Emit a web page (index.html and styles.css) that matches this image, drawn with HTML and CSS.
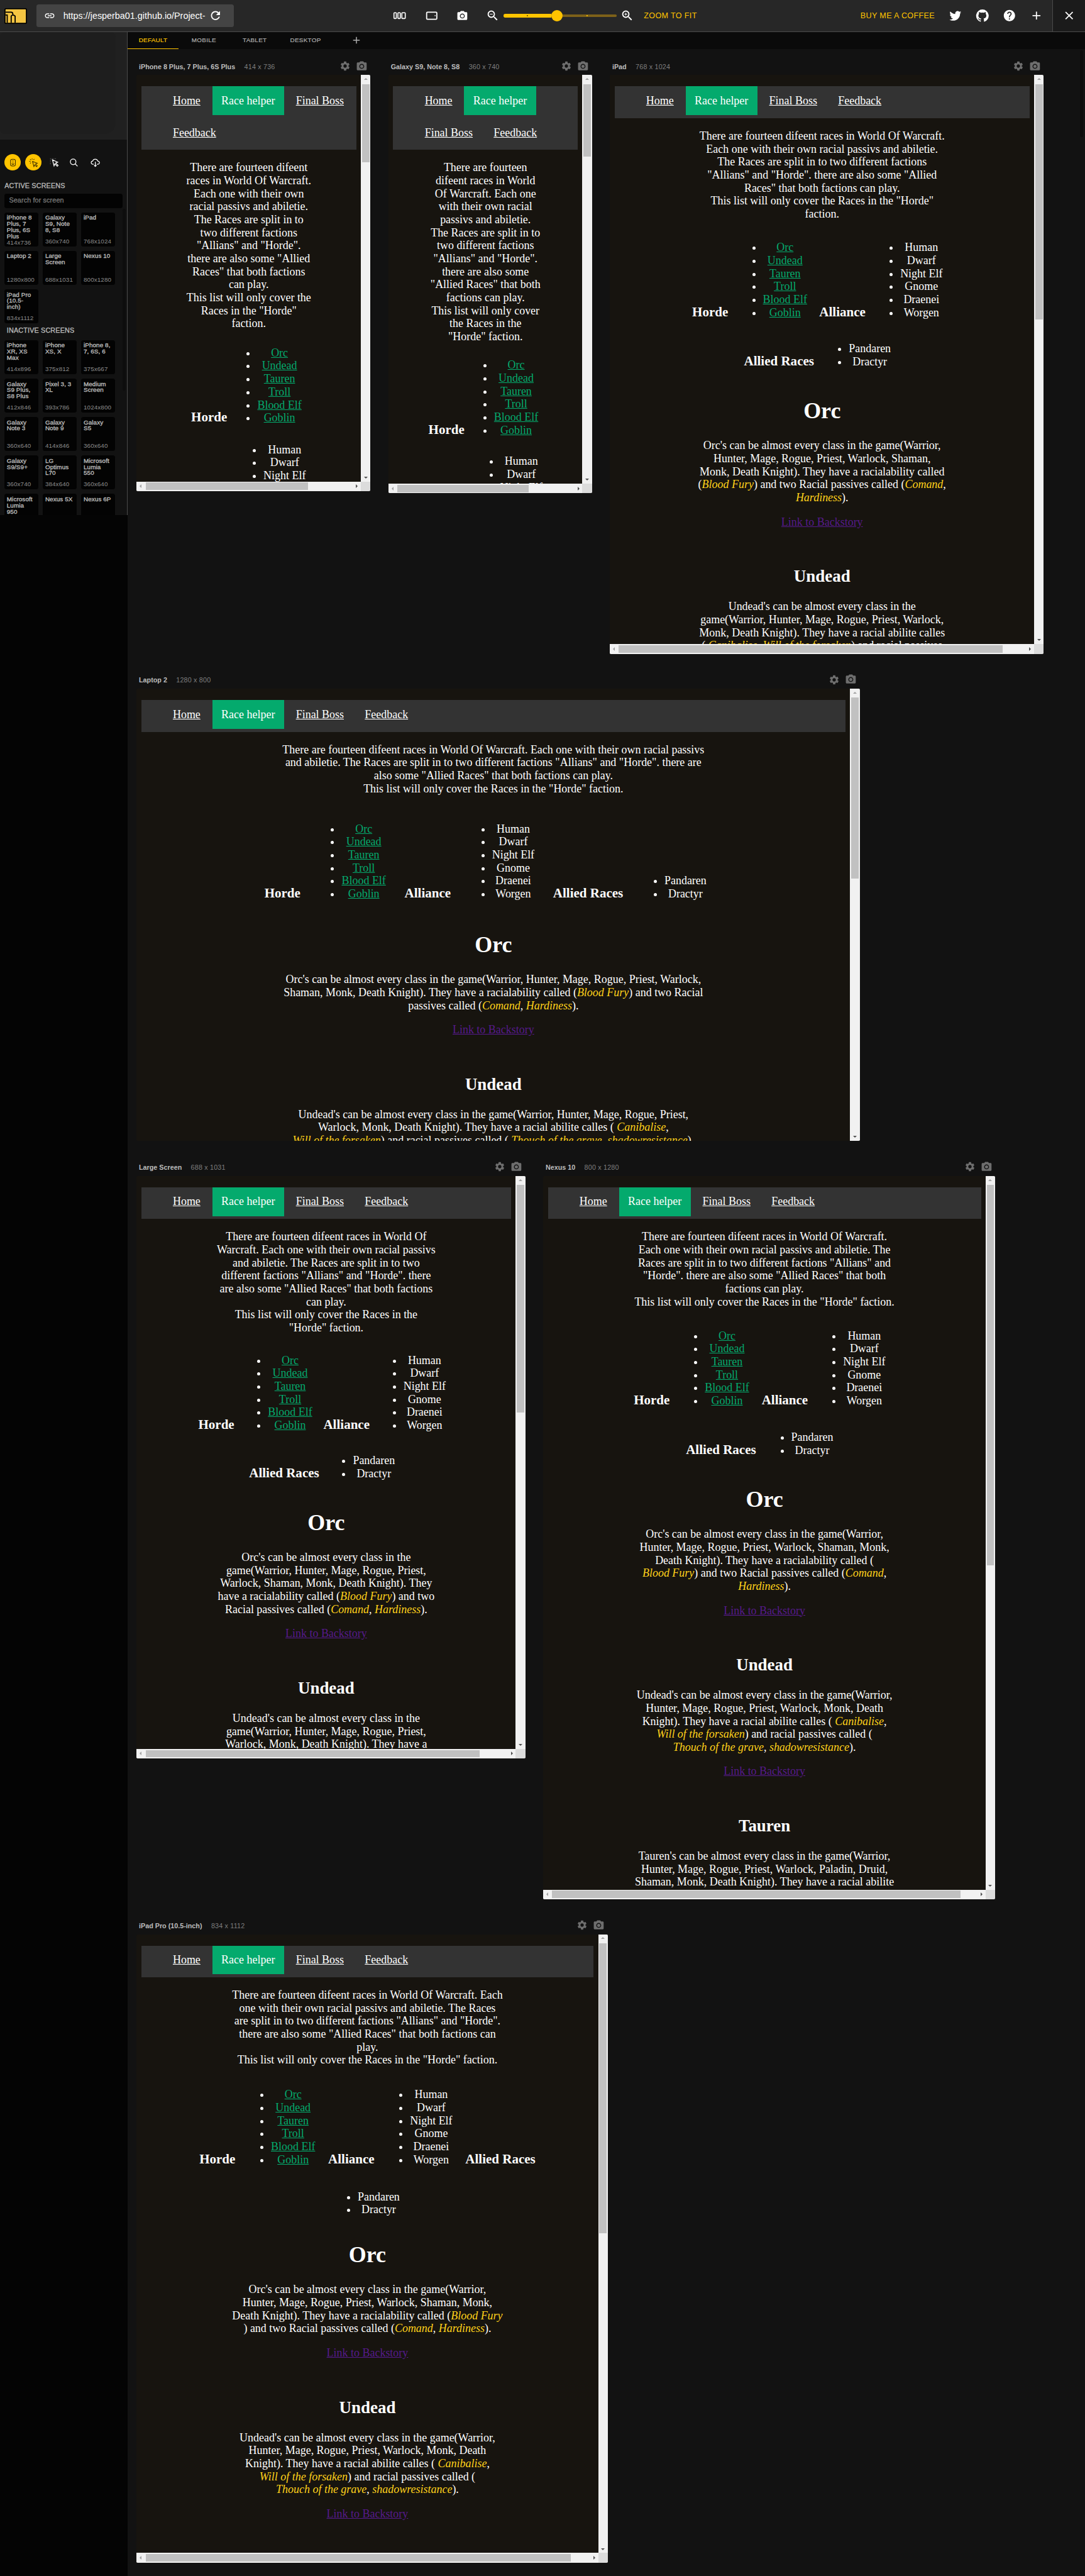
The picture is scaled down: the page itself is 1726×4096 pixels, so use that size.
FILE: index.html
```html
<!DOCTYPE html>
<html lang="en">
<head>
<meta charset="utf-8">
<title>Responsive Viewer</title>
<link rel="stylesheet" href="styles.css">
</head>
<body>
<svg class="sprite" aria-hidden="true">
  <symbol id="gear" viewBox="0 0 24 24"><path d="M19.14,12.94c0.04-0.3,0.06-0.61,0.06-0.94c0-0.32-0.02-0.64-0.07-0.94l2.03-1.58c0.18-0.14,0.23-0.41,0.12-0.61l-1.92-3.32c-0.12-0.22-0.37-0.29-0.59-0.22l-2.39,0.96c-0.5-0.38-1.03-0.7-1.62-0.94L14.4,2.81c-0.04-0.24-0.24-0.41-0.48-0.41h-3.84c-0.24,0-0.43,0.17-0.47,0.41L9.25,5.35C8.66,5.59,8.12,5.92,7.63,6.29L5.24,5.33c-0.22-0.08-0.47,0-0.59,0.22L2.74,8.87C2.62,9.08,2.66,9.34,2.86,9.48l2.03,1.58C4.84,11.36,4.8,11.69,4.8,12s0.02,0.64,0.07,0.94l-2.03,1.58c-0.18,0.14-0.23,0.41-0.12,0.61l1.92,3.32c0.12,0.22,0.37,0.29,0.59,0.22l2.39-0.96c0.5,0.38,1.03,0.7,1.62,0.94l0.36,2.54c0.05,0.24,0.24,0.41,0.48,0.41h3.84c0.24,0,0.44-0.17,0.47-0.41l0.36-2.54c0.59-0.24,1.13-0.56,1.62-0.94l2.39,0.96c0.22,0.08,0.47,0,0.59-0.22l1.92-3.32c0.12-0.22,0.07-0.47-0.12-0.61L19.14,12.94z M12,15.6c-1.98,0-3.6-1.62-3.6-3.6s1.62-3.6,3.6-3.6s3.6,1.62,3.6,3.6S13.98,15.6,12,15.6z"/></symbol>
  <symbol id="camera" viewBox="0 0 24 24"><circle cx="12" cy="12" r="3.2"/><path d="M9 2L7.17 4H4c-1.1 0-2 .9-2 2v12c0 1.1.9 2 2 2h16c1.1 0 2-.9 2-2V6c0-1.1-.9-2-2-2h-3.17L15 2H9zm3 15c-2.76 0-5-2.24-5-5s2.24-5 5-5 5 2.24 5 5-2.24 5-5 5z"/></symbol>
  <symbol id="plus" viewBox="0 0 24 24"><path d="M19 13h-6v6h-2v-6H5v-2h6V5h2v6h6v2z"/></symbol>
</svg>
<div class="app">
  <header class="topbar">
    <svg class="logo" viewBox="0 0 40 28"><rect x="1" y="1" width="38" height="26" rx="2" fill="#f5c542" stroke="#000" stroke-width="2"/><path d="M2 7h10q3 0 3 4v2M2 12h3v14M12 26V14q3-4 7 0v12" fill="none" stroke="#000" stroke-width="2"/></svg>
    <div class="url">
      <svg class="i20" viewBox="0 0 24 24"><path d="M3.9 12c0-1.71 1.39-3.1 3.1-3.1h4V7H7c-2.76 0-5 2.24-5 5s2.24 5 5 5h4v-1.9H7c-1.71 0-3.1-1.39-3.1-3.1zM8 13h8v-2H8v2zm9-6h-4v1.9h4c1.71 0 3.1 1.39 3.1 3.1s-1.39 3.1-3.1 3.1h-4V17h4c2.76 0 5-2.24 5-5s-2.24-5-5-5z"/></svg>
      <span class="url-text">https://jesperba01.github.io/Project-</span>
      <svg class="i24" viewBox="0 0 24 24"><path d="M17.65 6.35C16.2 4.9 14.21 4 12 4c-4.42 0-7.99 3.58-7.99 8s3.57 8 7.99 8c3.73 0 6.84-2.55 7.73-6h-2.08c-.82 2.33-3.04 4-5.65 4-3.31 0-6-2.69-6-6s2.69-6 6-6c1.66 0 3.14.69 4.22 1.78L13 11h7V4l-2.35 2.35z"/></svg>
    </div>
    <div class="views">
      <svg class="i24" viewBox="0 0 24 24"><g fill="none" stroke="#fff" stroke-width="1.8"><rect x="1.9" y="6.9" width="4.2" height="10.2" rx="1"/><rect x="8.9" y="6.9" width="4.2" height="10.2" rx="1"/><rect x="15.9" y="6.9" width="6" height="10.2" rx="1"/></g></svg>
      <svg class="i24" viewBox="0 0 24 24"><rect x="3" y="6" width="18" height="12.4" rx="1.5" fill="none" stroke="#fff" stroke-width="2"/><circle cx="18" cy="12" r="1"/></svg>
      <svg class="i21"><use href="#camera"/></svg>
    </div>
    <div class="zoom">
      <svg class="i24" viewBox="0 0 24 24"><path d="M15.5 14h-.79l-.28-.27C15.41 12.59 16 11.11 16 9.5 16 5.91 13.09 3 9.5 3S3 5.91 3 9.5 5.91 16 9.5 16c1.61 0 3.09-.59 4.23-1.57l.27.28v.79l5 4.99L20.49 19l-4.99-5zm-6 0C7.01 14 5 11.99 5 9.5S7.01 5 9.5 5 14 7.01 14 9.5 11.99 14 9.5 14zM7 9h5v1H7z"/></svg>
      <div class="slider"><span class="fill"></span><span class="knob"></span><span class="rest"></span></div>
      <svg class="i24" viewBox="0 0 24 24"><path d="M15.5 14h-.79l-.28-.27C15.41 12.59 16 11.11 16 9.5 16 5.91 13.09 3 9.5 3S3 5.91 3 9.5 5.91 16 9.5 16c1.61 0 3.09-.59 4.23-1.57l.27.28v.79l5 4.99L20.49 19l-4.99-5zm-6 0C7.01 14 5 11.99 5 9.5S7.01 5 9.5 5 14 7.01 14 9.5 11.99 14 9.5 14zm2.5-4h-2v2H9v-2H7V9h2V7h1v2h2v1z"/></svg>
      <span class="action">ZOOM TO FIT</span>
    </div>
    <div class="links">
      <span class="action">BUY ME A COFFEE</span>
      <svg class="i24" viewBox="0 0 24 24"><path d="M22.46 6c-.77.35-1.6.58-2.46.69.88-.53 1.56-1.37 1.88-2.38-.83.5-1.75.85-2.72 1.05C18.37 4.5 17.26 4 16 4c-2.35 0-4.27 1.92-4.27 4.29 0 .34.04.67.11.98C8.28 9.09 5.11 7.38 3 4.79c-.37.63-.58 1.37-.58 2.15 0 1.49.75 2.81 1.91 3.56-.71 0-1.37-.2-1.95-.5v.03c0 2.08 1.48 3.82 3.44 4.21a4.22 4.22 0 0 1-1.93.07 4.28 4.28 0 0 0 4 2.98 8.521 8.521 0 0 1-5.33 1.84c-.34 0-.68-.02-1.02-.06C3.44 20.29 5.7 21 8.12 21 16 21 20.33 14.46 20.33 8.79c0-.19 0-.37-.01-.56.84-.6 1.56-1.36 2.14-2.23z"/></svg>
      <svg class="i24" viewBox="-1 -1 26 26"><path d="M12 .3a12 12 0 0 0-3.8 23.4c.6.1.8-.3.8-.6v-2c-3.3.7-4-1.6-4-1.6-.6-1.4-1.4-1.8-1.4-1.8-1-.7.1-.7.1-.7 1.2 0 1.9 1.2 1.9 1.2 1 1.8 2.8 1.3 3.5 1 0-.8.4-1.3.7-1.6-2.7-.3-5.5-1.3-5.5-6 0-1.2.5-2.3 1.3-3.1-.2-.4-.6-1.6 0-3.2 0 0 1-.3 3.4 1.2a11.5 11.5 0 0 1 6 0c2.3-1.5 3.3-1.2 3.3-1.2.6 1.6.2 2.8 0 3.2.9.8 1.3 1.9 1.3 3.2 0 4.6-2.8 5.6-5.5 5.9.5.4.9 1 .9 2.2v3.3c0 .3.1.7.8.6A12 12 0 0 0 12 .3"/></svg>
      <svg class="i24" viewBox="0 0 24 24"><path d="M12 2C6.48 2 2 6.48 2 12s4.48 10 10 10 10-4.48 10-10S17.52 2 12 2zm1 17h-2v-2h2v2zm2.07-7.75l-.9.92C13.45 12.9 13 13.5 13 15h-2v-.5c0-1.1.45-2.1 1.17-2.83l1.24-1.26c.37-.36.59-.86.59-1.41 0-1.1-.9-2-2-2s-2 .9-2 2H8c0-2.21 1.79-4 4-4s4 1.79 4 4c0 .88-.36 1.68-.93 2.25z"/></svg>
      <svg class="i24"><use href="#plus"/></svg>
    </div>
    <div class="close"><svg class="i24" viewBox="0 0 24 24"><path d="M19 6.41L17.59 5 12 10.59 6.41 5 5 6.41 10.59 12 5 17.59 6.41 19 12 13.41 17.59 19 19 17.59 13.41 12z"/></svg></div>
  </header>

  <div class="body">
    <aside class="side">
      <div class="panel">
        <div class="preview"><span class="blob"></span></div>
        <div class="tools">
          <span class="tool on"><svg viewBox="0 0 24 24"><rect x="6" y="3.5" width="12" height="17" rx="4"/><path d="M12 6v8" stroke-dasharray="2 1.4"/><path d="M9 14.5l3 3 3-3"/></svg></span>
          <span class="tool on"><svg viewBox="0 0 24 24"><path d="M9 9l12 4.5-4.500 2 4.500 4.500-2 2-4.500-4.500-2 4.500zM8 1.500v3M3 3.500l2 2M1 8.500h3M3 14l2-2M13.500 3l-2 2"/></svg></span>
          <span class="tool gap"><svg viewBox="0 0 24 24"><path d="M2 16V2h14" stroke="#444" stroke-dasharray="4 2"/><path d="M7 5l13 6-5 2 6 6-2 2-6-6-2 5z"/></svg></span>
          <span class="tool"><svg viewBox="0 0 24 24"><circle cx="10" cy="10" r="7"/><path d="M15 15l6 6"/></svg></span>
          <span class="tool last"><svg viewBox="0 0 24 24"><path d="M8 16H6a4 4 0 0 1-.5-8 6.500 6.500 0 0 1 12.500 0 4 4 0 0 1 .5 8H16M12 10v11M9 18.500l3 3 3-3"/></svg></span>
        </div>
        <h4 class="side-title">ACTIVE SCREENS</h4>
        <div class="search">Search for screen</div>
        <div class="cards">
          <div class="card"><b>iPhone 8 Plus, 7 Plus, 6S Plus</b><i>414x736</i></div>
          <div class="card"><b>Galaxy S9, Note 8, S8</b><i>360x740</i></div>
          <div class="card"><b>iPad</b><i>768x1024</i></div>
          <div class="card"><b>Laptop 2</b><i>1280x800</i></div>
          <div class="card"><b>Large Screen</b><i>688x1031</i></div>
          <div class="card"><b>Nexus 10</b><i>800x1280</i></div>
          <div class="card"><b>iPad Pro (10.5-inch)</b><i>834x1112</i></div>
        </div>
        <h4 class="side-title inactive">INACTIVE SCREENS</h4>
        <div class="cards">
          <div class="card"><b>iPhone XR, XS Max</b><i>414x896</i></div>
          <div class="card"><b>iPhone XS, X</b><i>375x812</i></div>
          <div class="card"><b>iPhone 8, 7, 6S, 6</b><i>375x667</i></div>
          <div class="card"><b>Galaxy S9 Plus, S8 Plus</b><i>412x846</i></div>
          <div class="card"><b>Pixel 3, 3 XL</b><i>393x786</i></div>
          <div class="card"><b>Medium Screen</b><i>1024x800</i></div>
          <div class="card"><b>Galaxy Note 3</b><i>360x640</i></div>
          <div class="card"><b>Galaxy Note 9</b><i>414x846</i></div>
          <div class="card"><b>Galaxy S5</b><i>360x640</i></div>
          <div class="card"><b>Galaxy S9/S9+</b><i>360x740</i></div>
          <div class="card"><b>LG Optimus L70</b><i>384x640</i></div>
          <div class="card"><b>Microsoft Lumia 550</b><i>360x640</i></div>
          <div class="card"><b>Microsoft Lumia 950</b></div>
          <div class="card"><b>Nexus 5X</b></div>
          <div class="card"><b>Nexus 6P</b></div>
        </div>
        <span class="side-scroll"></span>
      </div>
    </aside>

    <main class="main">
      <nav class="tabs">
        <span class="tab active">DEFAULT</span><span class="tab">MOBILE</span><span class="tab">TABLET</span><span class="tab">DESKTOP</span><span class="tab add"><svg class="i24"><use href="#plus"/></svg></span>
      </nav>
      <span class="main-scroll"></span>
      <div class="screens">

        <section class="screen">
          <div class="head"><b>iPhone 8 Plus, 7 Plus, 6S Plus</b><span>414 x 736</span><svg class="i20"><use href="#gear"/></svg><svg class="i21"><use href="#camera"/></svg></div>
          <div class="frame" style="width:414px;height:736px">
            <div class="site">
              <ul class="menu"><li><a>Home</a></li> <li><a class="here">Race helper</a></li> <li><a>Final Boss</a></li> <li><a>Feedback</a></li></ul>
              <p>There are fourteen difeent races in World Of Warcraft. Each one with their own racial passivs and abiletie. The Races are split in to two different factions "Allians" and "Horde". there are also some "Allied Races" that both factions can play.<br>This list will only cover the Races in the "Horde" faction.</p>
              <div class="races">
                <h3>Horde</h3>
                <ul><li><a>Orc</a></li><li><a>Undead</a></li><li><a>Tauren</a></li><li><a>Troll</a></li><li><a>Blood Elf</a></li><li><a>Goblin</a></li></ul>
                <h3>Alliance</h3>
                <ul><li>Human</li><li>Dwarf</li><li>Night Elf</li><li>Gnome</li><li>Draenei</li><li>Worgen</li></ul>
              </div>
            </div>
            <div class="vbar"><span style="height:139px"></span></div>
            <div class="hbar"><span style="width:288px"></span></div>
            <div class="corner"></div>
          </div>
        </section>

        <section class="screen">
          <div class="head"><b>Galaxy S9, Note 8, S8</b><span>360 x 740</span><svg class="i20"><use href="#gear"/></svg><svg class="i21"><use href="#camera"/></svg></div>
          <div class="frame" style="width:360px;height:740px">
            <div class="site">
              <ul class="menu"><li><a>Home</a></li> <li><a class="here">Race helper</a></li> <li><a>Final Boss</a></li> <li><a>Feedback</a></li></ul>
              <p>There are fourteen difeent races in World Of Warcraft. Each one with their own racial passivs and abiletie. The Races are split in to two different factions "Allians" and "Horde". there are also some "Allied Races" that both factions can play.<br>This list will only cover the Races in the "Horde" faction.</p>
              <div class="races">
                <h3>Horde</h3>
                <ul><li><a>Orc</a></li><li><a>Undead</a></li><li><a>Tauren</a></li><li><a>Troll</a></li><li><a>Blood Elf</a></li><li><a>Goblin</a></li></ul>
                <h3>Alliance</h3>
                <ul><li>Human</li><li>Dwarf</li><li>Night Elf</li><li>Gnome</li><li>Draenei</li><li>Worgen</li></ul>
              </div>
            </div>
            <div class="vbar"><span style="height:128px"></span></div>
            <div class="hbar"><span style="width:232px"></span></div>
            <div class="corner"></div>
          </div>
        </section>

        <section class="screen">
          <div class="head"><b>iPad</b><span>768 x 1024</span><svg class="i20"><use href="#gear"/></svg><svg class="i21"><use href="#camera"/></svg></div>
          <div class="frame" style="width:768px;height:1024px">
            <div class="site">
              <ul class="menu"><li><a>Home</a></li> <li><a class="here">Race helper</a></li> <li><a>Final Boss</a></li> <li><a>Feedback</a></li></ul>
              <p>There are fourteen difeent races in World Of Warcraft. Each one with their own racial passivs and abiletie. The Races are split in to two different factions "Allians" and "Horde". there are also some "Allied Races" that both factions can play.<br>This list will only cover the Races in the "Horde" faction.</p>
              <div class="races">
                <h3>Horde</h3>
                <ul><li><a>Orc</a></li><li><a>Undead</a></li><li><a>Tauren</a></li><li><a>Troll</a></li><li><a>Blood Elf</a></li><li><a>Goblin</a></li></ul>
                <h3>Alliance</h3>
                <ul><li>Human</li><li>Dwarf</li><li>Night Elf</li><li>Gnome</li><li>Draenei</li><li>Worgen</li></ul>
                <h3>Allied Races</h3>
                <ul><li>Pandaren</li><li>Dractyr</li></ul>
              </div>
              <h1>Orc</h1>
              <p>Orc's can be almost every class in the game(Warrior, Hunter, Mage, Rogue, Priest, Warlock, Shaman, Monk, Death Knight). They have a racialability called (<em>Blood Fury</em>) and two Racial passives called (<em>Comand</em>, <em>Hardiness</em>).</p>
              <p><a class="story">Link to Backstory</a></p><br>
              <h2>Undead</h2>
              <p>Undead's can be almost every class in the game(Warrior, Hunter, Mage, Rogue, Priest, Warlock, Monk, Death Knight). They have a racial abilite calles ( <em>Canibalise</em>, <em>Will of the forsaken</em>) and racial passives</p>
            </div>
            <div class="vbar"><span style="height:417px"></span></div>
            <div class="hbar"><span style="width:680px"></span></div>
            <div class="corner"></div>
          </div>
        </section>

        <section class="screen">
          <div class="head"><b>Laptop 2</b><span>1280 x 800</span><svg class="i20"><use href="#gear"/></svg><svg class="i21"><use href="#camera"/></svg></div>
          <div class="frame tall-only" style="width:1280px;height:800px">
            <div class="site">
              <ul class="menu"><li><a>Home</a></li> <li><a class="here">Race helper</a></li> <li><a>Final Boss</a></li> <li><a>Feedback</a></li></ul>
              <p>There are fourteen difeent races in World Of Warcraft. Each one with their own racial passivs and abiletie. The Races are split in to two different factions "Allians" and "Horde". there are also some "Allied Races" that both factions can play.<br>This list will only cover the Races in the "Horde" faction.</p>
              <div class="races">
                <h3>Horde</h3>
                <ul><li><a>Orc</a></li><li><a>Undead</a></li><li><a>Tauren</a></li><li><a>Troll</a></li><li><a>Blood Elf</a></li><li><a>Goblin</a></li></ul>
                <h3>Alliance</h3>
                <ul><li>Human</li><li>Dwarf</li><li>Night Elf</li><li>Gnome</li><li>Draenei</li><li>Worgen</li></ul>
                <h3>Allied Races</h3>
                <ul><li>Pandaren</li><li>Dractyr</li></ul>
              </div>
              <h1>Orc</h1>
              <p>Orc's can be almost every class in the game(Warrior, Hunter, Mage, Rogue, Priest, Warlock, Shaman, Monk, Death Knight). They have a racialability called (<em>Blood Fury</em>) and two Racial passives called (<em>Comand</em>, <em>Hardiness</em>).</p>
              <p><a class="story">Link to Backstory</a></p><br>
              <h2>Undead</h2>
              <p>Undead's can be almost every class in the game(Warrior, Hunter, Mage, Rogue, Priest, Warlock, Monk, Death Knight). They have a racial abilite calles ( <em>Canibalise</em>, <em>Will of the forsaken</em>) and racial passives called ( <em>Thouch of the grave</em>, <em>shadowresistance</em>).</p>
            </div>
            <div class="vbar"><span style="height:320px"></span></div>
          </div>
        </section>

        <section class="screen">
          <div class="head"><b>Large Screen</b><span>688 x 1031</span><svg class="i20"><use href="#gear"/></svg><svg class="i21"><use href="#camera"/></svg></div>
          <div class="frame" style="width:688px;height:1031px">
            <div class="site">
              <ul class="menu"><li><a>Home</a></li> <li><a class="here">Race helper</a></li> <li><a>Final Boss</a></li> <li><a>Feedback</a></li></ul>
              <p>There are fourteen difeent races in World Of Warcraft. Each one with their own racial passivs and abiletie. The Races are split in to two different factions "Allians" and "Horde". there are also some "Allied Races" that both factions can play.<br>This list will only cover the Races in the "Horde" faction.</p>
              <div class="races">
                <h3>Horde</h3>
                <ul><li><a>Orc</a></li><li><a>Undead</a></li><li><a>Tauren</a></li><li><a>Troll</a></li><li><a>Blood Elf</a></li><li><a>Goblin</a></li></ul>
                <h3>Alliance</h3>
                <ul><li>Human</li><li>Dwarf</li><li>Night Elf</li><li>Gnome</li><li>Draenei</li><li>Worgen</li></ul>
                <h3>Allied Races</h3>
                <ul><li>Pandaren</li><li>Dractyr</li></ul>
              </div>
              <h1>Orc</h1>
              <p>Orc's can be almost every class in the game(Warrior, Hunter, Mage, Rogue, Priest, Warlock, Shaman, Monk, Death Knight). They have a racialability called (<em>Blood Fury</em>) and two Racial passives called (<em>Comand</em>, <em>Hardiness</em>).</p>
              <p><a class="story">Link to Backstory</a></p><br>
              <h2>Undead</h2>
              <p>Undead's can be almost every class in the game(Warrior, Hunter, Mage, Rogue, Priest, Warlock, Monk, Death Knight). They have a</p>
            </div>
            <div class="vbar"><span style="height:403px"></span></div>
            <div class="hbar"><span style="width:591px"></span></div>
            <div class="corner"></div>
          </div>
        </section>

        <section class="screen">
          <div class="head"><b>Nexus 10</b><span>800 x 1280</span><svg class="i20"><use href="#gear"/></svg><svg class="i21"><use href="#camera"/></svg></div>
          <div class="frame" style="width:800px;height:1280px">
            <div class="site">
              <ul class="menu"><li><a>Home</a></li> <li><a class="here">Race helper</a></li> <li><a>Final Boss</a></li> <li><a>Feedback</a></li></ul>
              <p>There are fourteen difeent races in World Of Warcraft. Each one with their own racial passivs and abiletie. The Races are split in to two different factions "Allians" and "Horde". there are also some "Allied Races" that both factions can play.<br>This list will only cover the Races in the "Horde" faction.</p>
              <div class="races">
                <h3>Horde</h3>
                <ul><li><a>Orc</a></li><li><a>Undead</a></li><li><a>Tauren</a></li><li><a>Troll</a></li><li><a>Blood Elf</a></li><li><a>Goblin</a></li></ul>
                <h3>Alliance</h3>
                <ul><li>Human</li><li>Dwarf</li><li>Night Elf</li><li>Gnome</li><li>Draenei</li><li>Worgen</li></ul>
                <h3>Allied Races</h3>
                <ul><li>Pandaren</li><li>Dractyr</li></ul>
              </div>
              <h1>Orc</h1>
              <p>Orc's can be almost every class in the game(Warrior, Hunter, Mage, Rogue, Priest, Warlock, Shaman, Monk, Death Knight). They have a racialability called (<em>Blood Fury</em>) and two Racial passives called (<em>Comand</em>, <em>Hardiness</em>).</p>
              <p><a class="story">Link to Backstory</a></p><br>
              <h2>Undead</h2>
              <p>Undead's can be almost every class in the game(Warrior, Hunter, Mage, Rogue, Priest, Warlock, Monk, Death Knight). They have a racial abilite calles ( <em>Canibalise</em>, <em>Will of the forsaken</em>) and racial passives called ( <em>Thouch of the grave</em>, <em>shadowresistance</em>).</p>
              <p><a class="story">Link to Backstory</a></p><br>
              <h2>Tauren</h2>
              <p>Tauren's can be almost every class in the game(Warrior, Hunter, Mage, Rogue, Priest, Warlock, Paladin, Druid, Shaman, Monk, Death Knight). They have a racial abilite</p>
            </div>
            <div class="vbar"><span style="height:673px"></span></div>
            <div class="hbar"><span style="width:723px"></span></div>
            <div class="corner"></div>
          </div>
        </section>

        <section class="screen">
          <div class="head"><b>iPad Pro (10.5-inch)</b><span>834 x 1112</span><svg class="i20"><use href="#gear"/></svg><svg class="i21"><use href="#camera"/></svg></div>
          <div class="frame" style="width:834px;height:1112px">
            <div class="site">
              <ul class="menu"><li><a>Home</a></li> <li><a class="here">Race helper</a></li> <li><a>Final Boss</a></li> <li><a>Feedback</a></li></ul>
              <p>There are fourteen difeent races in World Of Warcraft. Each one with their own racial passivs and abiletie. The Races are split in to two different factions "Allians" and "Horde". there are also some "Allied Races" that both factions can play.<br>This list will only cover the Races in the "Horde" faction.</p>
              <div class="races">
                <h3>Horde</h3>
                <ul><li><a>Orc</a></li><li><a>Undead</a></li><li><a>Tauren</a></li><li><a>Troll</a></li><li><a>Blood Elf</a></li><li><a>Goblin</a></li></ul>
                <h3>Alliance</h3>
                <ul><li>Human</li><li>Dwarf</li><li>Night Elf</li><li>Gnome</li><li>Draenei</li><li>Worgen</li></ul>
                <h3>Allied Races</h3>
                <ul><li>Pandaren</li><li>Dractyr</li></ul>
              </div>
              <h1>Orc</h1>
              <p>Orc's can be almost every class in the game(Warrior, Hunter, Mage, Rogue, Priest, Warlock, Shaman, Monk, Death Knight). They have a racialability called (<em>Blood Fury</em>) and two Racial passives called (<em>Comand</em>, <em>Hardiness</em>).</p>
              <p><a class="story">Link to Backstory</a></p><br>
              <h2>Undead</h2>
              <p>Undead's can be almost every class in the game(Warrior, Hunter, Mage, Rogue, Priest, Warlock, Monk, Death Knight). They have a racial abilite calles ( <em>Canibalise</em>, <em>Will of the forsaken</em>) and racial passives called ( <em>Thouch of the grave</em>, <em>shadowresistance</em>).</p>
              <p><a class="story">Link to Backstory</a></p>
            </div>
            <div class="vbar"><span style="height:514px"></span></div>
            <div class="hbar"><span style="width:753px"></span></div>
            <div class="corner"></div>
          </div>
        </section>

      </div>
    </main>
  </div>
</div>
</body>
</html>
```
FILE: styles.css
```css
* { box-sizing: border-box; }
html { background: #121212; overflow: hidden; }
body { margin: 0; font-family: "Liberation Sans", Arial, sans-serif; }
svg { fill: currentColor; flex: none; display: block; }
.sprite { width: 0; height: 0; position: absolute; }
.i20 { width: 20px; height: 20px; }
.i21 { width: 21px; height: 21px; }
.i24 { width: 24px; height: 24px; }

.app { zoom: 0.8985; width: 1921px; height: 4559px; overflow: hidden; background: #121212; color: #fff; }

/* top bar */
.topbar { display: flex; align-items: center; height: 57px; background: #272727; border-bottom: 1px solid #4a4a4a; }
.logo { width: 40px; height: 28px; margin-left: 8px; }
.url { display: flex; align-items: center; width: 350px; height: 40px; margin-left: 16px; padding: 0 20px 0 14px; background: #444; border-radius: 4px; }
.url-text { flex: 1; margin: 0 4px 0 14px; font-size: 16px; white-space: nowrap; overflow: hidden; }
.views { display: flex; align-items: center; gap: 32px; margin-left: 282px; }
.zoom { display: flex; align-items: center; margin-left: 31px; }
.slider { display: flex; align-items: center; width: 200px; margin: 0 7px 0 8px; }
.fill { width: 84px; height: 6px; border-radius: 3px 0 0 3px; background: linear-gradient(#6b5200, #6b5200) 41px 2px / 2px 2px no-repeat #ffc400; }
.knob { width: 20px; height: 20px; border-radius: 50%; background: #ffc400; }
.rest { flex: 1; height: 4px; border-radius: 0 2px 2px 0; background: linear-gradient(#ffc400, #ffc400) 42px 1px / 2px 2px no-repeat #7d6119; }
.action { color: #ffc400; font-size: 14px; letter-spacing: .4px; white-space: nowrap; }
.zoom .action { margin-left: 17px; }
.links { display: flex; align-items: center; gap: 24px; margin-left: auto; margin-right: 16px; }
.close { display: flex; align-items: center; justify-content: center; width: 58px; height: 56px; background: #1b1b1b; border-left: 1px solid #4a4a4a; }

.body { display: flex; height: 4502px; }

/* sidebar */
.side { width: 226px; background: #040404; }
.panel { position: relative; height: 854px; overflow: hidden; background: #121212; border-right: 1px solid #4a4a4a; }
.preview { height: 190px; background: #202020; }
.blob { display: block; width: 205px; height: 180px; border-radius: 8px 8px 20px 8px; background: #1e1e1e; }
.tools { display: flex; align-items: center; gap: 8px; padding: 26px 8px 0; }
.tool { display: flex; align-items: center; justify-content: center; width: 29px; height: 29px; border-radius: 50%; }
.tool svg { width: 17px; height: 17px; fill: none; stroke: currentColor; stroke-width: 2; }
.tool.on { background: #ffc400; color: #3a2d00; }
.tool.on svg { stroke-width: 1.6; }
.tool.gap { margin-right: -3px; }
.tool.last { margin-left: 1px; }
.side-title { margin: 19px 0 0 8px; font-size: 12px; line-height: 16px; font-weight: 400; letter-spacing: .2px; color: #bdbdbd; -webkit-text-stroke: .35px #bdbdbd; }
.side-title.inactive { margin: 5px 0 9px 12px; }
.search { width: 209px; height: 25px; margin: 6px 0 8px 8px; padding-left: 8px; border-radius: 4px; background: #030303; color: #7c7c7c; font-size: 12px; line-height: 24px; letter-spacing: .15px; -webkit-text-stroke: .3px #7c7c7c; }
.cards { display: grid; grid-template-columns: repeat(3, 60px); grid-auto-rows: 60px; gap: 8px; margin-left: 8px; }
.card { display: flex; flex-direction: column; justify-content: space-between; padding: 4px 6px 3px 4px; border-radius: 4px; background: #030303; font-size: 11px; line-height: 11px; letter-spacing: .1px; }
.card b { font-weight: 400; color: #c4c4c4; -webkit-text-stroke: .3px #c4c4c4; }
.card i { font-style: normal; color: #8c8c8c; white-space: nowrap; }
.side-scroll { position: absolute; left: 217px; top: 312px; width: 6px; height: 322px; border-radius: 3px; background: #0d0d0d; }

/* workspace */
.main { position: relative; flex: 1; }
.tabs { display: flex; height: 30px; background: #0a0a0a; }
.tab { display: flex; align-items: center; justify-content: center; width: 90px; padding-bottom: 1px; font-size: 11px; letter-spacing: .3px; color: #b0b0b0; -webkit-text-stroke: .2px currentColor; border-bottom: 2px solid transparent; }
.tab.active { color: #ffc400; border-color: #ffc400; }
.tab.add .i24 { width: 20px; height: 20px; }
.main-scroll { position: absolute; right: 3px; top: 32px; width: 6px; height: 154px; border-radius: 3px; background: #0c0c0c; }
.screens { display: flex; flex-wrap: wrap; align-items: flex-start; column-gap: 32px; padding: 0 60px 0 16px; }
.head { display: flex; align-items: center; height: 62px; padding: 31px 5px 0 4px; font-size: 12px; letter-spacing: .2px; color: #6e6e6e; }
.screen:nth-child(-n+3) .head { height: 46px; padding-top: 15px; }
.head svg { margin-top: -1px; }
.head b { color: #bdbdbd; letter-spacing: 0; }
.head span { margin: 0 auto 0 16px; color: #7e7e7e; }
.head svg + svg { margin-left: 9px; }

/* emulated viewport */
.frame { display: grid; grid-template: minmax(0, 1fr) 17px / minmax(0, 1fr) 17px; overflow: hidden; border-radius: 2px; background: #17140f; }
.frame.tall-only { grid-template-rows: minmax(0, 1fr); }
.vbar, .hbar { display: flex; justify-content: space-between; align-items: center; background: #f1f1f1; }
.vbar { flex-direction: column; }
.vbar::before, .vbar::after, .hbar::before, .hbar::after { content: ""; flex: none; border: 4px solid transparent; }
.vbar::before { margin: 2px 0 7px; border-bottom-color: #a3a3a3; }
.vbar::after { margin: auto 0 2px; border-top-color: #505050; }
.hbar::before { margin: 0 7px 0 2px; border-right-color: #a3a3a3; }
.hbar::after { margin: 0 2px 0 auto; border-left-color: #505050; }
.vbar span { flex: none; width: 13px; background: #c1c1c1; }
.hbar span { flex: none; height: 13px; background: #c1c1c1; }
.corner { background: #dcdcdc; }

/* visited site */
.site { padding: 20px 8px 0; overflow: hidden; font: 20px/23px "Liberation Serif", "Times New Roman", serif; color: #fff; text-align: center; }
.menu { margin: 0; padding: 0 0 0 40px; list-style: none; text-align: left; background: #333; }
.menu li { display: inline-block; overflow: hidden; }
.menu a { display: block; padding: 14px 16px; text-decoration: underline; }
.menu .here { background: #04aa6d; text-decoration: none; }
.site p { width: 60%; margin: 20px auto; }
.site h1 { margin: 26.8px 0; font-size: 40px; line-height: 46px; }
.site h2 { margin: 24.9px 0; font-size: 30px; line-height: 34px; }
.races { width: 75%; margin: 0 auto; padding-bottom: 1px; }
.races h3 { display: inline-block; margin: 23.4px 0 24px; font-size: 23.4px; line-height: 27px; }
.races ul { display: inline-block; margin: 3%; padding: 0 0 0 40px; }
.races a { color: #04aa6d; text-decoration: underline; }
.site em { display: inline-block; color: #ffd21a; }
.story { color: #551a8b; text-decoration: underline; }
```
